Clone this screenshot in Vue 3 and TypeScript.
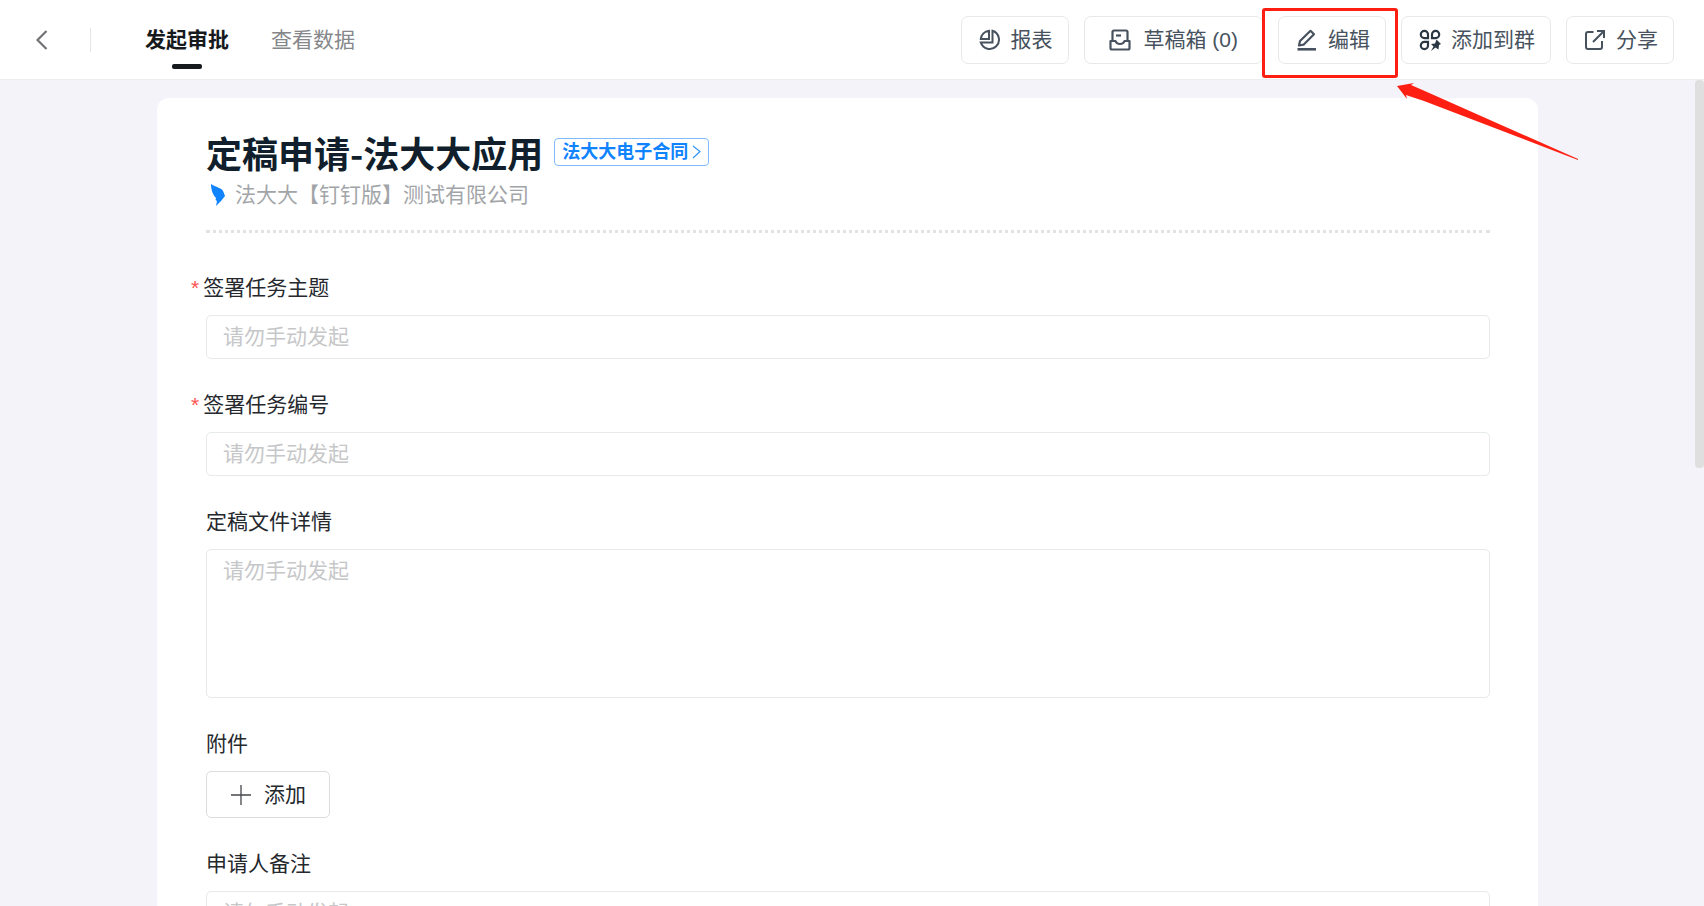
<script setup lang="ts">
import { ref } from 'vue'

interface Tab {
  id: string
  name: string
}

interface Field {
  id: string
  label: string
  kind: 'input' | 'textarea' | 'upload'
  required?: boolean
  placeholder?: string
}

const tabs: Tab[] = [
  { id: 'start', name: '发起审批' },
  { id: 'data', name: '查看数据' },
]
const activeTab = ref('start')

const fields: Field[] = [
  { id: 'subject', label: '签署任务主题', kind: 'input', required: true, placeholder: '请勿手动发起' },
  { id: 'number', label: '签署任务编号', kind: 'input', required: true, placeholder: '请勿手动发起' },
  { id: 'detail', label: '定稿文件详情', kind: 'textarea', placeholder: '请勿手动发起' },
  { id: 'files', label: '附件', kind: 'upload' },
  { id: 'remark', label: '申请人备注', kind: 'input', placeholder: '请勿手动发起' },
]
</script>

<template>
  <div class="page">
    <header class="topbar">
      <button class="back" type="button" aria-label="返回">
        <svg width="12" height="20" viewBox="0 0 12 20"><path d="M10.5 1 L1.5 10 L10.5 19" fill="none" stroke="#707275" stroke-width="2.2" /></svg>
      </button>
      <span class="divider"></span>
      <nav class="tabs">
        <button
          v-for="tab in tabs"
          :key="tab.id"
          type="button"
          class="tab"
          :class="{ active: tab.id === activeTab }"
          @click="activeTab = tab.id"
        >{{ tab.name }}</button>
      </nav>
      <div class="actions">
        <button class="action" type="button">
          <svg class="icon" viewBox="0 0 22 22" fill="none" stroke="#47525e" stroke-width="2">
            <path d="M13.500 1.800 A9.300 9.300 0 1 1 1.800 13.500 H13.500 Z" />
            <path d="M10 1.800 V10 H1.800 A9 9 0 0 1 10 1.800 Z" />
          </svg>
          <span>报表</span>
        </button>
        <button class="action wide" type="button">
          <svg class="icon" viewBox="0 0 22 22" fill="none" stroke="#47525e" stroke-width="2.2" stroke-linejoin="round">
            <path d="M3.500 12 V3 Q3.500 1.500 5 1.500 H17 Q18.500 1.500 18.500 3 V12" />
            <path d="M1.500 12 H6.500 Q7.500 15 11 15 T15.500 12 H20.500 V19 Q20.500 20.500 19 20.500 H3 Q1.500 20.500 1.500 19 Z" />
            <path d="M7 6.500 H12" />
          </svg>
          <span>草稿箱 (0)</span>
        </button>
        <div class="marked">
          <button class="action" type="button">
            <svg class="icon" viewBox="0 0 22 22" fill="none" stroke="#47525e" stroke-width="2.2" stroke-linejoin="round">
              <path d="M3 16.500 L4 12 L14.500 1.800 L18 5.200 L7.500 15.700 Z" />
              <path d="M1.500 20.300 H20" stroke-width="2.600" />
            </svg>
            <span>编辑</span>
          </button>
          <span class="frame"></span>
          <svg class="arrow" width="182" height="78" viewBox="0 0 182 78">
            <path d="M0 3 L17 0 L14 2 L30 9 L181 76 L181 77 L27 18 L9 12 L10 16 Z" fill="#ff1f12" />
          </svg>
        </div>
        <button class="action" type="button">
          <svg class="icon" viewBox="0 0 22 22" fill="none" stroke="#2b3743" stroke-width="2.200">
            <path d="M9 5.500 A3.600 3.600 0 1 0 5.400 9.100 H9 Z" />
            <path d="M13 5.500 A3.600 3.600 0 1 1 16.600 9.100 H13 Z" />
            <path d="M9 16.500 A3.600 3.600 0 1 1 5.400 12.900 H9 Z" />
            <path d="M17.500 10.500 L22 15 L20 16 L19.500 20.500 L16.500 18.500 L12 22 L14.500 17.500 L12 15 L16 14.500 Z" fill="#2b3743" stroke="none" />
          </svg>
          <span>添加到群</span>
        </button>
        <button class="action" type="button">
          <svg class="icon" viewBox="0 0 22 22" fill="none" stroke="#47525e" stroke-width="2">
            <path d="M9.500 3 H4 Q2 3 2 5 V18 Q2 20 4 20 H16 Q18 20 18 18 V12" />
            <path d="M13 2 H20 V9 M20 2 L9 13" />
          </svg>
          <span>分享</span>
        </button>
      </div>
    </header>

    <div class="body">
      <main class="scroller">
        <form class="card" @submit.prevent>
          <div class="heading">
            <h1>定稿申请-法大大应用</h1>
            <a class="badge" href="#">法大大电子合同<svg width="9" height="14" viewBox="0 0 9 14"><path d="M1 1 L8 6.500 L1 13" fill="none" stroke="#3296fa" stroke-width="1.200" /></svg></a>
          </div>
          <p class="company">
            <svg width="14" height="22" viewBox="0 0 14 22"><path d="M0 0 C4 3 12 4 12.500 8 L14 12 L10 17 L9 18 L5 22 L6 17 L4.500 16 L5 14 C2 11 0 6 0 0 Z" fill="#1083ff" /></svg>
            <span>法大大【钉钉版】测试有限公司</span>
          </p>
          <div class="fields">
            <div v-for="field in fields" :key="field.id" class="field">
              <label :for="field.id" :class="{ required: field.required }">{{ field.label }}</label>
              <input v-if="field.kind === 'input'" :id="field.id" type="text" :placeholder="field.placeholder" />
              <textarea v-else-if="field.kind === 'textarea'" :id="field.id" :placeholder="field.placeholder"></textarea>
              <button v-else :id="field.id" class="add" type="button">
                <svg width="20" height="20" viewBox="0 0 20 20"><path d="M10 0 V20 M0 10 H20" stroke="#44474b" stroke-width="1.300" /></svg>
                <span>添加</span>
              </button>
            </div>
          </div>
        </form>
      </main>
      <div class="track"><div class="thumb"></div></div>
    </div>
  </div>
</template>

<style>
body {
  margin: 0;
}
</style>

<style scoped>
* {
  box-sizing: border-box;
}

.page {
  height: 100vh;
  display: flex;
  flex-direction: column;
  overflow: hidden;
  background: #f4f3f9;
  font-family: "Liberation Sans", "Noto Sans CJK SC", sans-serif;
  font-size: 21px;
  line-height: 30px;
  color: #25282d;
}

button,
input,
textarea {
  font: inherit;
  color: inherit;
  margin: 0;
}

svg {
  display: block;
  flex: none;
}

.topbar {
  height: 80px;
  flex: none;
  display: flex;
  align-items: center;
  padding: 0 30px 0 36px;
  background: #fff;
  border-bottom: 1px solid #ededf0;
}

.back {
  padding: 0;
  border: 0;
  background: none;
}

.divider {
  width: 1px;
  height: 24px;
  margin-left: 42px;
  background: #e4e5e6;
}

.tabs {
  align-self: stretch;
  display: flex;
  gap: 42px;
  margin-left: 54px;
}

.tab {
  position: relative;
  padding: 0;
  border: 0;
  background: none;
  color: #85878a;
  white-space: nowrap;
}

.tab.active {
  color: #171a1d;
  font-weight: 700;
}

.tab.active::after {
  content: "";
  position: absolute;
  left: 50%;
  bottom: 10px;
  width: 30px;
  height: 5px;
  margin-left: -15px;
  border-radius: 2px;
  background: #171a1d;
}

.actions {
  display: flex;
  gap: 15px;
  margin-left: auto;
}

.action {
  height: 48px;
  display: flex;
  align-items: center;
  gap: 10px;
  padding: 0 15px 0 17px;
  border: 1px solid #e6e9ea;
  border-radius: 7px;
  background: #fff;
  color: #47525e;
  white-space: nowrap;
}

.action.wide {
  gap: 13px;
  padding: 0 24px;
}

.icon {
  width: 22px;
  height: 22px;
}

.marked {
  position: relative;
}

.frame {
  position: absolute;
  inset: -8px -12px -14px -16px;
  border: 3px solid #ff1f12;
  border-radius: 3px;
  pointer-events: none;
}

.arrow {
  position: absolute;
  left: 119px;
  top: 67px;
  z-index: 2;
  pointer-events: none;
}

.body {
  flex: 1;
  min-height: 0;
  display: flex;
}

.scroller {
  flex: 1;
  min-width: 0;
  overflow: hidden;
  padding: 18px 157px 0;
}

.track {
  width: 9px;
  flex: none;
}

.thumb {
  height: 47%;
  border-radius: 4px;
  background: #dfdfdf;
}

.card {
  padding: 30px 48px 48px 49px;
  border-radius: 12px;
  background: #fff;
}

.heading {
  display: flex;
  align-items: center;
  gap: 11px;
  padding-bottom: 4px;
}

h1 {
  margin: 0;
  font-family: "Noto Sans CJK SC", sans-serif;
  font-size: 36px;
  line-height: 48px;
  color: #111f2c;
  white-space: nowrap;
}

.badge {
  height: 28px;
  display: flex;
  align-items: center;
  gap: 4px;
  padding: 0 7px;
  border: 1px solid #7fbbff;
  border-radius: 4px;
  font-size: 18px;
  line-height: 26px;
  font-weight: 700;
  color: #1083ff;
  text-decoration: none;
  white-space: nowrap;
}

.company {
  display: flex;
  align-items: center;
  gap: 10px;
  margin: 0;
  padding: 0 0 20px 5px;
  border-bottom: 3px dotted #e1e2e4;
  color: #a2a5a8;
}

.fields {
  display: flex;
  flex-direction: column;
  gap: 31px;
  padding-top: 40px;
}

.field {
  display: flex;
  flex-direction: column;
  align-items: flex-start;
  gap: 12px;
}

label.required {
  margin-left: -15px;
}

label.required::before {
  content: "*";
  margin-right: 4px;
  color: #ff5350;
}

input,
textarea {
  display: block;
  width: 100%;
  padding: 0 16px;
  border: 1px solid #e6eaea;
  border-radius: 5px;
  background: #fff;
  outline: 0;
}

input {
  height: 44px;
}

textarea {
  height: 149px;
  padding-top: 6px;
  resize: none;
}

input::placeholder,
textarea::placeholder {
  color: #c6c7c9;
  opacity: 1;
}

.add {
  height: 47px;
  display: flex;
  align-items: center;
  gap: 13px;
  padding: 0 23px 0 24px;
  border: 1px solid #dcdddf;
  border-radius: 5px;
  background: #fff;
}
</style>
